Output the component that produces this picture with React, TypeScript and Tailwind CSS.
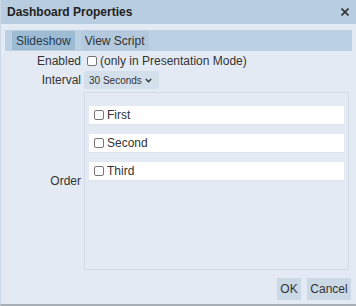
const FONT = { fontFamily: '"Liberation Sans", Arial, sans-serif' };

function Box() {
  return (
    <span className="inline-block h-[10px] w-[10px] shrink-0 rounded-[2px] border border-[#767676] bg-white" />
  );
}

function OrderItem({ label }: { label: string }) {
  return (
    <div className="flex h-[19px] items-center gap-[3px] border-b border-[#dbe3ec] bg-white pl-[5px] text-[12px] text-[#333]">
      <Box />
      <span>{label}</span>
    </div>
  );
}

export default function App() {
  return (
    <div
      className="flex h-[306px] w-[356px] flex-col border-b-2 border-l border-b-[#a7aeb6] border-l-[#cbd8e6] bg-[#e3eaf3]"
      style={FONT}
    >
      {/* title bar */}
      <div className="flex h-[24px] shrink-0 items-center justify-between bg-[#b9cde0] pl-[6px] pr-[7px]">
        <span className="text-[12px] font-bold text-[#222]">Dashboard Properties</span>
        <svg width="8" height="8" viewBox="0 0 8 8" className="text-[#333]">
          <path d="M0.5 0.5 L7.5 7.5 M7.5 0.5 L0.5 7.5" stroke="currentColor" strokeWidth="1.6" />
        </svg>
      </div>

      {/* tabs */}
      <div className="mx-[4px] mt-[6px] flex h-[21px] shrink-0 gap-[6px] bg-[#bcd0e3] pl-[7px] pt-[1px]">
        <div className="flex h-[19px] items-center rounded-t-[2px] bg-[#9ebbd4] px-[4px] text-[12px] text-[#1e3a4f]">
          Slideshow
        </div>
        <div className="flex h-[19px] items-center rounded-t-[2px] bg-[#b4c9dd] px-[4px] text-[12px] text-[#333]">
          View Script
        </div>
      </div>

      {/* form */}
      <div className="mt-[3px] flex flex-col gap-[3px] pr-[7px] text-[12px] text-[#333]">
        <div className="flex h-[14px] items-center">
          <span className="w-[80px] shrink-0 text-right">Enabled</span>
          <span className="ml-[6px] flex items-center gap-[3px]">
            <Box />
            <span>(only in Presentation Mode)</span>
          </span>
        </div>
        <div className="flex h-[18px] items-center">
          <span className="w-[80px] shrink-0 text-right">Interval</span>
          <div className="ml-[3px] flex h-[18px] w-[75px] items-center justify-between rounded-[3px] bg-[#d3dfeb] pl-[5px] pr-[7px] text-[10px]">
            <span>30 Seconds</span>
            <svg width="7" height="5" viewBox="0 0 7 5" className="text-[#333]">
              <path d="M0.8 1 L3.5 3.8 L6.2 1" fill="none" stroke="currentColor" strokeWidth="1.3" />
            </svg>
          </div>
        </div>
        <div className="flex h-[178px] items-center">
          <span className="w-[80px] shrink-0 text-right">Order</span>
          <div className="ml-[3px] flex h-full flex-1 flex-col gap-[9px] border border-[#d2dce7] px-[4px] pt-[13px]">
            <OrderItem label="First" />
            <OrderItem label="Second" />
            <OrderItem label="Third" />
          </div>
        </div>
      </div>

      {/* footer */}
      <div className="mt-[8px] flex justify-end gap-[6px] pr-[5px]">
        <button className="flex h-[22px] w-[24px] items-center justify-center bg-[#cbd9e7] text-[12px] text-[#333]">
          OK
        </button>
        <button className="flex h-[22px] w-[44px] items-center justify-center bg-[#cbd9e7] text-[12px] text-[#333]">
          Cancel
        </button>
      </div>
    </div>
  );
}
